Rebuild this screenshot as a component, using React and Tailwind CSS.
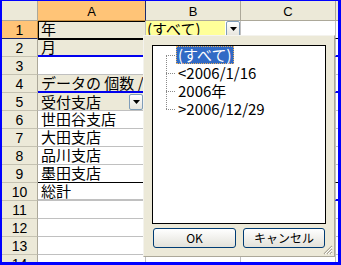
import React from "react";

const jp = { fontFamily: '"Noto Sans CJK JP", "Noto Sans", sans-serif' };
const lat = { fontFamily: '"Liberation Sans", Arial, sans-serif' };

function DropButton() {
  return (
    <div className="flex h-[16px] w-[14px] items-center justify-center rounded-[2px] border border-[#7f9db9] bg-gradient-to-b from-white to-[#e6e4dc]">
      <svg width="7" height="4" viewBox="0 0 7 4">
        <path d="M0 0h7L3.5 4z" fill="#000" />
      </svg>
    </div>
  );
}

function Row({ n, active, a, aClass = "border-b-[#c0c0c0]", bottom = "border-b border-b-[#c0c0c0]", b }) {
  return (
    <div className="flex h-[18px] shrink-0">
      <div
        style={lat}
        className={`w-[36px] shrink-0 border-r border-b pt-[1px] text-center text-[14px] leading-[16px] text-black ${
          active ? "border-r-[#c98f3e] border-b-[#1c2b6e] bg-[#ffc477]" : "border-r-[#aca899] border-b-[#c5c2b2] bg-[#ece9d8]"
        }`}
      >
        {n}
      </div>
      <div className={`relative w-[108px] shrink-0 overflow-hidden border-r border-r-[#c0c0c0] ${bottom} ${aClass}`}>{a}</div>
      <div className={`relative w-[95px] shrink-0 border-r border-r-[#c0c0c0] ${bottom}`}>{b}</div>
      <div className={`w-[95px] shrink-0 border-r border-r-[#c0c0c0] ${bottom}`} />
      <div className={`flex-1 ${bottom}`} />
    </div>
  );
}

function CellText({ children }) {
  return (
    <div style={jp} className="whitespace-nowrap pl-[3px] text-[15px] leading-[16px] text-black">
      {children}
    </div>
  );
}

const items = ["(すべて)", "<2006/1/16", "2006年", ">2006/12/29"];

export default function App() {
  return (
    <div className="relative h-[265px] w-[341px] overflow-hidden border-t border-l-2 border-r-[3px] border-b-[3px] border-[#0000ff] bg-white">
      <div className="flex h-[261px] flex-col overflow-hidden">
        <div className="flex h-[20px] shrink-0">
          <div className="w-[36px] shrink-0 border-r border-b border-r-[#aca899] border-b-[#aca899] bg-[#ece9d8]" />
          <div
            style={lat}
            className="w-[108px] shrink-0 border-r border-b border-r-[#1c2b6e] border-b-[#c98f3e] bg-[#ffc477] pt-[2px] text-center text-[13px] leading-[17px]"
          >
            A
          </div>
          <div
            style={lat}
            className="w-[95px] shrink-0 border-r border-b border-r-[#aca899] border-b-[#aca899] bg-[#ece9d8] pt-[2px] text-center text-[13px] leading-[17px]"
          >
            B
          </div>
          <div
            style={lat}
            className="w-[95px] shrink-0 border-r border-b border-r-[#aca899] border-b-[#aca899] bg-[#ece9d8] pt-[2px] text-center text-[13px] leading-[17px]"
          >
            C
          </div>
          <div className="flex-1 border-b border-b-[#aca899] bg-[#ece9d8]" />
        </div>

        <Row
          n="1"
          active
          aClass="bg-[#ece9d8] border-b-black shadow-[inset_1px_1px_0_#000]"
          bottom="border-b"
          a={<CellText>年</CellText>}
          b={
            <div className="flex h-full">
              <div style={jp} className="w-[80px] whitespace-nowrap bg-[#ffff99] pl-[1px] text-[15px] leading-[16px]">
                (すべて)
              </div>
              <div className="pl-[1px]">
                <DropButton />
              </div>
            </div>
          }
        />
        <Row
          n="2"
          aClass="bg-[#ece9d8] shadow-[inset_0_1px_0_#000]"
          bottom="border-b-2 border-b-[#0000ee]"
          a={<CellText>月</CellText>}
        />
        <Row n="3" />
        <Row
          n="4"
          aClass="bg-[#ece9d8]"
          bottom="border-b-2 border-b-[#0000ee]"
          a={<CellText>データの 個数 / 受付日</CellText>}
        />
        <Row
          n="5"
          aClass="bg-[#ece9d8]"
          a={
            <div className="flex h-full items-center justify-between">
              <CellText>受付支店</CellText>
              <div className="pr-[2px]">
                <DropButton />
              </div>
            </div>
          }
        />
        <Row n="6" a={<CellText>世田谷支店</CellText>} />
        <Row n="7" a={<CellText>大田支店</CellText>} />
        <Row n="8" a={<CellText>品川支店</CellText>} />
        <Row n="9" bottom="border-b border-b-black" a={<CellText>墨田支店</CellText>} />
        <Row n="10" bottom="border-b-2 border-b-[#0000ee]" a={<CellText>総計</CellText>} />
        <Row n="11" />
        <Row n="12" />
        <Row n="13" />
        <Row n="14" />
      </div>

      <div className="absolute left-[141px] top-[34px] flex h-[222px] w-[192px] flex-col border border-t-[#f4f3ee] border-l-[#f4f3ee] border-r-[#aca899] border-b-[#aca899] bg-[#ece9d8] pt-[9px] pl-[8px]">
        <div className="relative h-[179px] w-[174px] border border-black bg-white">
          <div className="absolute left-[13px] top-[9px] h-[54px] border-l border-dotted border-l-[#8a8a8a]" />
          {[9, 27, 45, 63].map((t) => (
            <div
              key={t}
              style={{ top: t }}
              className="absolute left-[13px] w-[9px] border-t border-dotted border-t-[#8a8a8a]"
            />
          ))}
          <div className="flex flex-col pl-[23px]">
            {items.map((it, i) => (
              <div key={it} className="flex h-[18px]">
                <div
                  style={jp}
                  className={`whitespace-nowrap px-[1px] text-[15px] leading-[16px] ${
                    i === 0
                      ? "border border-dotted border-[#e8b060] bg-[#316ac5] text-white"
                      : "border border-transparent text-black"
                  }`}
                >
                  {it}
                </div>
              </div>
            ))}
          </div>
        </div>
        <div className="mt-[4px] flex gap-[7px] pl-[1px]">
          <button
            style={jp}
            className="h-[20px] w-[83px] rounded-[3px] border border-[#003c74] bg-gradient-to-b from-white to-[#e3e2da] text-[12px] leading-[16px] text-black"
          >
            OK
          </button>
          <button
            style={jp}
            className="h-[20px] w-[82px] rounded-[3px] border border-[#003c74] bg-gradient-to-b from-white to-[#e3e2da] text-[12px] leading-[16px] text-black"
          >
            キャンセル
          </button>
        </div>
        <svg className="absolute bottom-[1px] right-[1px]" width="11" height="11" viewBox="0 0 11 11">
          <path d="M10 2L2 10M10 5L5 10M10 8L8 10" stroke="#aca899" strokeWidth="1.2" />
          <path d="M10 3L3 10M10 6L6 10M10 9L9 10" stroke="#fff" strokeWidth="1" />
        </svg>
      </div>
    </div>
  );
}
